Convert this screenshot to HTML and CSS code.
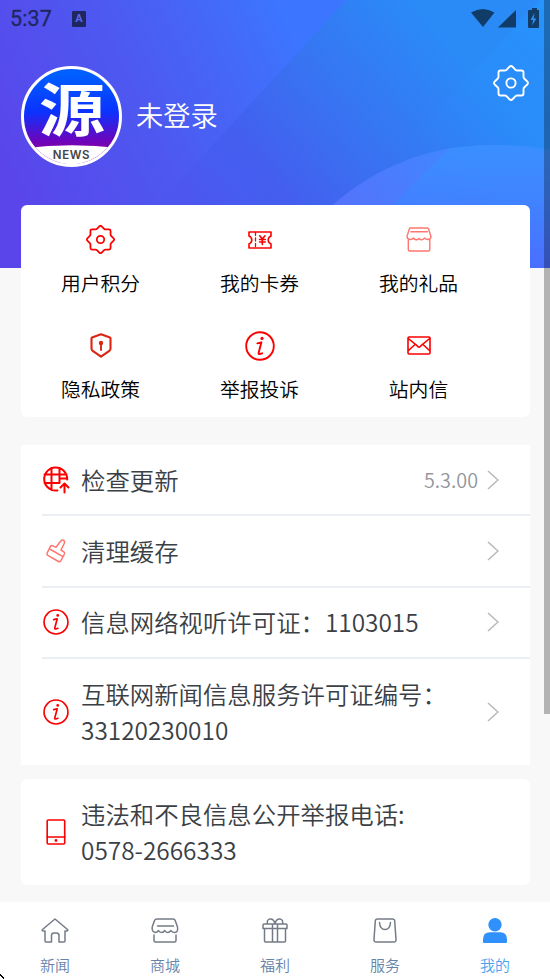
FILE: index.html
```html
<!DOCTYPE html>
<html lang="zh-CN">
<head>
<meta charset="utf-8">
<title>我的</title>
<link rel="stylesheet" href="styles.css">
</head>
<body>
<svg class="defs" width="0" height="0">
  <defs>
    <symbol id="gear" viewBox="0 0 36 36"><path d="M16.2 2Q18 0 19.8 2L22.5 4.8Q23.2 5.5 24.3 5.5H28.5Q30.5 5.5 30.5 7.5V11.7Q30.5 12.8 31.2 13.5L34 16.2Q36 18 34 19.8L31.2 22.5Q30.5 23.2 30.5 24.3V28.5Q30.5 30.5 28.5 30.5H24.3Q23.2 30.5 22.5 31.2L19.8 34Q18 36 16.2 34L13.5 31.2Q12.8 30.5 11.7 30.5H7.5Q5.5 30.5 5.5 28.5V24.3Q5.5 23.2 4.8 22.5L2 19.8Q0 18 2 16.2L4.8 13.5Q5.5 12.8 5.5 11.7V7.5Q5.5 5.5 7.5 5.5H11.7Q12.8 5.5 13.5 4.8Z"/><circle cx="18" cy="18" r="4.6"/></symbol>
    <symbol id="info" viewBox="0 0 30 30"><circle cx="15" cy="15" r="13.8"/><path d="M12.3 12.3 16.4 11.3 13.6 22Q13.3 23.4 14.8 23L17.2 22.3"/><circle class="solid" cx="17" cy="7.4" r="1.6"/></symbol>
    <symbol id="arrow" viewBox="0 0 12 20"><path d="M1 1 11 10 1 19"/></symbol>
  </defs>
</svg>
<div class="app">
  <header class="hero">
    <svg class="hero-art" viewBox="0 0 550 268" preserveAspectRatio="none">
      <defs>
        <linearGradient id="sky" gradientUnits="userSpaceOnUse" x1="0" y1="170" x2="290" y2="30">
          <stop offset="0" stop-color="#5a45ea"/><stop offset=".5" stop-color="#4d59f1"/><stop offset=".8" stop-color="#4469f8"/><stop offset="1" stop-color="#3c75ff"/>
        </linearGradient>
        <linearGradient id="band" gradientUnits="userSpaceOnUse" x1="180" y1="250" x2="440" y2="30">
          <stop offset="0" stop-color="#4e4eec"/><stop offset=".35" stop-color="#435fef"/><stop offset=".65" stop-color="#3775f2"/><stop offset="1" stop-color="#2a8bf7"/>
        </linearGradient>
        <linearGradient id="fade" gradientUnits="userSpaceOnUse" x1="150" y1="180" x2="310" y2="110">
          <stop offset="0" stop-color="#fff" stop-opacity="0"/><stop offset=".6" stop-color="#fff"/>
        </linearGradient>
        <mask id="soft"><rect width="550" height="268" fill="url(#fade)"/></mask>
        <linearGradient id="corner" gradientUnits="userSpaceOnUse" x1="410" y1="150" x2="545" y2="20">
          <stop offset="0" stop-color="#2f84fb" stop-opacity="0"/><stop offset="1" stop-color="#2598ff"/>
        </linearGradient>
        <linearGradient id="disc" gradientUnits="userSpaceOnUse" x1="350" y1="230" x2="460" y2="140">
          <stop offset="0" stop-color="#5472fb"/><stop offset="1" stop-color="#4088ff"/>
        </linearGradient>
        <linearGradient id="discFade" x1="0" y1="145" x2="0" y2="268" gradientUnits="userSpaceOnUse">
          <stop offset="0" stop-color="#3892ff" stop-opacity=".7"/><stop offset="1" stop-color="#4a6eff"/>
        </linearGradient>
      </defs>
      <rect width="550" height="268" fill="url(#sky)"/>
      <path d="M346 0H550V268H100Z" fill="url(#band)" mask="url(#soft)"/>
      <path d="M540 0H550V268H290Z" fill="url(#corner)" opacity=".6"/>
      <circle cx="490" cy="381" r="236" fill="url(#disc)"/>
      <path d="M449 149Q500 141 550 149V268H336L394 203Z" fill="url(#discFade)"/>
    </svg>
    <div class="status">
      <span class="clock">5:37</span>
      <span class="badge-a">A</span>
      <svg class="signals" width="70" height="20" viewBox="0 0 70 20"><path d="M0 3.5Q12-3.500 23.500 3.500L12 18Z"/><path d="M45 1V18.500H27Z"/><path d="M61-1H66V1H68V18Q68 19 67 19H58Q57 19 57 18V2Q57 1 58 1H61Z"/><path class="bolt" d="M63.500 4 59.500 11H62.200L61 16.500 65.500 9.500H62.800Z"/></svg>
    </div>
    <div class="profile">
      <div class="avatar">
        <span class="avatar-char">源</span>
        <svg class="avatar-base" viewBox="0 0 100 20"><path d="M0 3.5Q50-3 100 3.5V20H0Z"/></svg>
        <span class="avatar-news">NEWS</span>
      </div>
      <span class="login">未登录</span>
      <svg class="settings line" width="36" height="36"><use href="#gear"/></svg>
    </div>
  </header>

  <main>
    <section class="shortcuts">
      <a class="shortcut"><span class="ico"><svg class="line gear-s" width="29" height="29"><use href="#gear"/></svg></span>用户积分</a>
      <a class="shortcut"><span class="ico"><svg class="line" width="24" height="18" viewBox="0 0 24 18"><path stroke-width="1.600" d="M1 1H23V5Q20.2 6.300 20.200 9T23 13V17H1V13Q3.800 11.700 3.800 9T1 5Z"/><path stroke-width="1.300" stroke-dasharray="3 2.500" d="M7.500 1.500V17"/><path stroke-width="1.600" d="M11.700 4.800 14.300 8 17 4.800M11.500 8.500H17.300M11.500 11H17.300M14.300 8V13.500"/></svg></span>我的卡券</a>
      <a class="shortcut"><span class="ico"><svg class="line pale" width="26" height="25" viewBox="0 0 26 25"><path stroke-width="1.400" d="M4.500 1H21.500Q22.300 1 22.600 2L25 9.500Q25 12.500 21.800 12.500 19.800 12.500 18.500 11 17 13 15.200 12.800 13.800 12.600 13 11.300 12 13 10 12.800 8.500 12.500 7.500 11 6 12.800 4 12.500 1 12 1 9.500L3.300 2Q3.600 1 4.500 1ZM2.300 13V22.500Q2.300 24 3.800 24H22.200Q23.800 24 23.800 22.500V13M5 4.800H21.500"/></svg></span>我的礼品</a>
      <a class="shortcut"><span class="ico"><svg class="line dark" width="22" height="25" viewBox="0 0 22 25"><path stroke-width="2.100" d="M11 1.300 20 4.500Q20.500 4.700 20.500 5.300V15.500Q20.500 17 19.300 17.900L11 23.600 2.700 17.900Q1.500 17 1.500 15.500V5.300Q1.500 4.700 2 4.500Z"/><circle class="solid" cx="11" cy="10" r="2.200"/><path stroke-width="1.900" d="M11 10V17"/></svg></span>隐私政策</a>
      <a class="shortcut"><span class="ico"><svg class="line info" width="30" height="30"><use href="#info"/></svg></span>举报投诉</a>
      <a class="shortcut"><span class="ico"><svg class="line" width="24" height="19" viewBox="0 0 24 19"><path stroke-width="1.600" d="M2 1H22Q23 1 23 2V17Q23 18 22 18H2Q1 18 1 17V2Q1 1 2 1ZM1.300 2.500 10 9.700Q12 12.500 14 9.700L22.700 2.500M1.500 14.500 8 8.500M22.500 14.500 16 8.500"/></svg></span>站内信</a>
    </section>

    <section class="list">
      <a class="item"><span class="lead"><svg class="line" width="26" height="27" viewBox="0 0 26 27"><path stroke-width="2" d="M14.500 24.400A11.500 11.500 0 1 1 24.200 13.500M1.500 8.500H23.500M1.500 17H16M8.500 2V24M16.500 2V17M16.500 12.500H24"/><path stroke-width="2" d="M21.500 26.500V18M17.500 21.500 21.500 17.500 25.500 21.500"/></svg></span><span class="text">检查更新</span><span class="version">5.3.00</span><svg class="chev" width="12" height="20"><use href="#arrow"/></svg></a>
      <a class="item"><span class="lead"><svg class="line pale" width="20" height="24" viewBox="0 0 20 24"><path stroke-width="1.500" d="M4.500 7.300Q5.500 6 7 6.800L10 8.300 14.800 2Q16.500.300 18 1.600 19.200 2.800 18.200 4.500L15 11 17.800 12.800Q19 13.600 18.400 15L14.800 21.800Q14 23.300 12.500 22.500L1.800 16.300Q.400 15.300 1.200 13.800ZM4.500 10.500 16.500 17.300"/></svg></span><span class="text">清理缓存</span><svg class="chev" width="12" height="20"><use href="#arrow"/></svg></a>
      <a class="item"><span class="lead"><svg class="line info" width="26" height="26"><use href="#info"/></svg></span><span class="text">信息网络视听许可证：1103015</span><svg class="chev" width="12" height="20"><use href="#arrow"/></svg></a>
      <a class="item tall"><span class="lead"><svg class="line info" width="26" height="26"><use href="#info"/></svg></span><span class="text">互联网新闻信息服务许可证编号：<br>33120230010</span><svg class="chev" width="12" height="20"><use href="#arrow"/></svg></a>
    </section>

    <section class="list phone">
      <a class="item tall"><span class="lead"><svg class="line" width="20" height="26" viewBox="0 0 20 26"><rect x="1.200" y="1" width="17.500" height="24" rx="1" stroke-width="1.600"/><path stroke-width="1.500" d="M1 18H19"/><circle class="solid" cx="10" cy="21.500" r="1.400"/></svg></span><span class="text">违法和不良信息公开举报电话:<br>0578-2666333</span></a>
    </section>
  </main>

  <nav class="tabs">
    <a class="tab"><svg width="28" height="25" viewBox="0 0 28 25"><path d="M1.500 11.500 14 1 26.500 11.500Q27.500 13 25.500 13H24V23Q24 24 23 24H18V17.500Q18 15 15.300 15H13Q10.500 15 10.500 17.500V24H5Q4 24 4 23V13H2.500Q.500 13 1.500 11.500Z"/></svg>新闻</a>
    <a class="tab"><svg width="28" height="25" viewBox="0 0 28 25"><path d="M6 1H22Q23.700 1 24.200 2.500L26.500 9Q27.500 14.500 23.500 14.500 21 14.500 20 12.500 18.500 14.500 16.500 14.500 14.800 14.500 13.800 12.500 12.500 14.500 10.500 14.500 8.500 14.500 7.500 12.500 6 14.500 4.500 14.500.500 14 1.200 9L3.500 2.500Q4.200 1 6 1ZM6.500 8H22.500M3 17V22.500Q3 24 4.500 24H23.500Q25 24 25 22.500V17"/></svg>商城</a>
    <a class="tab"><svg width="26" height="25" viewBox="0 0 26 25"><path d="M2 6H24Q25 6 25 7V10.500H1V7Q1 6 2 6ZM2.500 10.500V23Q2.500 24 3.500 24H22.500Q23.500 24 23.500 23V10.500M10.500 6V24M15.500 6V24M5.500 6Q4.500 1.500 8 1 11.500.500 13 5.500 14.500.500 18 1 21.500 1.500 20.500 6"/></svg>福利</a>
    <a class="tab"><svg width="24" height="25" viewBox="0 0 24 25"><path d="M4.500 1H19.500Q21.500 1 21.700 3L23 21.500Q23.200 24 20.800 24H3.200Q.800 24 1 21.500L2.300 3Q2.500 1 4.500 1ZM6.500 4.500Q7 11.500 12 11.500T17.500 4.500"/></svg>服务</a>
    <a class="tab active"><svg width="24" height="25" viewBox="0 0 24 25"><circle cx="12" cy="6.800" r="6.700"/><path d="M0 24V21.500Q0 14.300 7 14.300H17Q24 14.300 24 21.500V24Q24 25 23 25H1Q0 25 0 24Z"/></svg>我的</a>
  </nav>
  <div class="scrollbar"></div>
  <svg class="pointer" width="5" height="5" viewBox="0 0 5 5"><path d="M0 0H1V1H2V2H3V3H4V5H3V4H2V3H1V2H0Z"/></svg>
</div>
</body>
</html>
```
FILE: styles.css
```css
* { box-sizing: border-box; }
body {
  margin: 0;
  background: #f8f8f8;
  color: #000;
  font-family: "Noto Sans CJK SC", sans-serif;
  font-weight: 350;
}
.defs { position: absolute; }
.app {
  position: relative;
  width: 550px;
  height: 979px;
  display: flex;
  flex-direction: column;
  overflow: hidden;
}
svg { display: block; flex: none; overflow: visible; }
.line { fill: none; stroke: #fb0000; stroke-linecap: round; stroke-linejoin: round; }
.line.pale { stroke: #ff7770; }
.line.dark { stroke: #dc2413; }
.solid { fill: #fb0000; stroke: none; }
.dark .solid { fill: #dc2413; }
.gear-s { stroke-width: 2.2; }
.info { stroke-width: 1.9; }

.hero { position: relative; height: 205px; flex: none; }
.hero-art { position: absolute; left: 0; top: 0; width: 550px; height: 268px; overflow: hidden; }
.status {
  position: relative;
  height: 38px;
  display: flex;
  align-items: center;
  padding: 0 9px 0 10px;
  color: #202760;
}
.clock { font: 400 21.5px/38px Roboto, sans-serif; letter-spacing: .1px; width: 62px; -webkit-text-stroke: .3px #202760; }
.badge-a {
  width: 14px;
  height: 16px;
  border-radius: 1px;
  background: #202760;
  color: #5a67ec;
  font: 700 11px/15px Roboto, sans-serif;
  text-align: center;
}
.signals { margin-left: auto; fill: #123c68; }
.signals .bolt { fill: #2b90f8; }
.profile { position: relative; display: flex; align-items: center; padding: 28px 20px 0 21px; }
.avatar {
  position: relative;
  width: 101px;
  height: 101px;
  border: 3px solid #fff;
  border-radius: 50%;
  overflow: hidden;
  background: linear-gradient(#0060ff 5%, #0b32ff 45%, #6b05bd 75%, #8a009e 88%);
}
.avatar-char {
  position: absolute;
  left: 15px;
  top: 9px;
  color: #fff;
  font-weight: 700;
  font-size: 66px;
  line-height: 56px;
  transform: scaleY(.86);
}
.avatar-base { position: absolute; left: -2px; top: 76px; width: 100px; height: 20px; fill: #fff; }
.avatar-news {
  position: absolute;
  left: 0;
  right: 0;
  top: 79px;
  text-align: center;
  color: #444;
  font: 600 11.5px/14px Inter, sans-serif;
  letter-spacing: .6px;
}
.login { margin-left: 14px; color: #fff; font-size: 27.3px; line-height: 40px; margin-top: -6px; }
.settings { margin: -68px 1px 0 auto; stroke: #fff; stroke-width: 1.9; }

main { position: relative; flex: 1; padding: 0 20px 0 21px; }
.shortcuts {
  height: 212px;
  display: grid;
  grid-template-columns: repeat(3, 159px);
  grid-template-rows: 106px 106px;
  background: #fff;
  border-radius: 6px;
}
.shortcut {
  display: flex;
  flex-direction: column;
  align-items: center;
  padding-top: 18px;
  font-size: 19.8px;
  line-height: 30px;
}
.ico { height: 33px; margin-bottom: 12px; display: flex; align-items: center; }
.list { margin-top: 28px; background: #fff; padding-left: 21px; color: #3a4045; }
.list.phone { margin-top: 14px; border-radius: 6px; }
.item {
  height: 71.3px;
  display: flex;
  align-items: center;
  padding-right: 31px;
  border-bottom: 2px solid #eceef6;
}
.item.tall { height: 106px; border-bottom: 0; }
.lead { width: 28px; margin-right: 11px; display: flex; justify-content: center; }
.text { flex: 1; font-size: 24.4px; line-height: 36px; white-space: nowrap; }
.version { color: #94979c; font-size: 19.8px; margin-right: 9px; }
.chev { fill: none; stroke: #b8b8b8; stroke-width: 1.5; }

.tabs { position: relative; height: 77px; flex: none; display: flex; background: #fff; }
.tab {
  flex: 1;
  display: flex;
  flex-direction: column;
  align-items: center;
  padding-top: 16px;
  color: #6682a8;
  font-size: 15px;
  line-height: 22px;
}
.tab svg { fill: none; stroke: #747b87; stroke-width: 1.5; stroke-linejoin: round; stroke-linecap: round; margin-bottom: 11px; }
.tab.active { color: #4ba3ef; }
.tab.active svg { fill: #3091fd; stroke: none; }
.scrollbar { position: absolute; right: 0; top: 0; width: 6px; height: 714px; background: rgba(0, 0, 0, .28); }
.pointer { position: absolute; left: 0; bottom: 0; }
```
